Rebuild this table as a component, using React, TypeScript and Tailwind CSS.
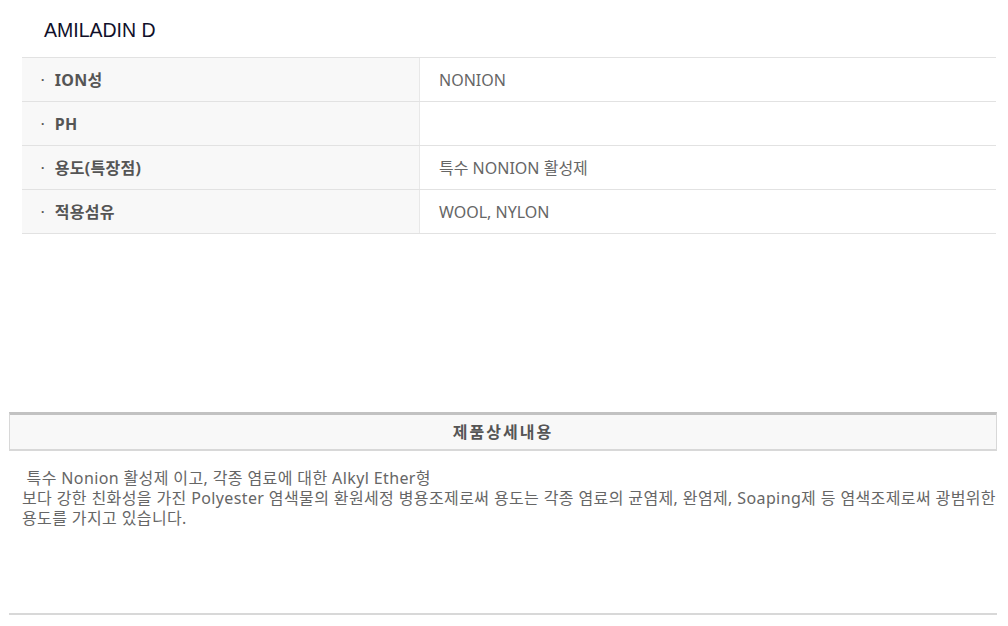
import React from "react";

const rows = [
  { label: "ION성", value: "NONION" },
  { label: "PH", value: "" },
  { label: "용도(특장점)", value: "특수 NONION 활성제" },
  { label: "적용섬유", value: "WOOL, NYLON" },
];

const font = { fontFamily: '"Noto Sans", "Noto Sans CJK KR", sans-serif' };

export default function App() {
  return (
    <div className="w-[1008px] min-h-[626px] bg-white" style={font}>
      {/* Product name */}
      <div className="h-[57px] pl-[44px] pt-[17px]">
        <h1 className="text-[19.5px] leading-[26px] text-[#10102a] font-['Liberation_Sans',sans-serif]">
          AMILADIN D
        </h1>
      </div>

      {/* Spec table */}
      <div className="ml-[22px] w-[974px] border-t border-[#e2e2e2]">
        {rows.map((row) => (
          <div key={row.label} className="flex h-[44px] border-b border-[#e2e2e2]">
            <div className="w-[398px] flex items-center bg-[#f8f8f8] border-r border-[#e8e8e8] pl-[19px] text-[16px] font-bold text-[#555] tracking-[0.3px]">
              <span className="mr-[10px] text-[12px]">·</span>
              {row.label}
            </div>
            <div className="flex-1 flex items-center pl-[19px] text-[16px] text-[#666]">
              {row.value}
            </div>
          </div>
        ))}
      </div>

      <div className="h-[178px]" />

      {/* Detail section */}
      <div className="ml-[9px] w-[988px] h-[39px] flex items-center justify-center bg-[#f8f8f8] border-t-[3px] border-t-[#c2c2c2] border-x border-x-[#d8d8d8] border-b-2 border-b-[#d8d8d8]">
        <span className="text-[16px] font-bold text-[#555] tracking-[2px]">제품상세내용</span>
      </div>

      <div className="pl-[22px] pt-[17px] text-[16px] leading-[20px] text-[#666] h-[162px] whitespace-nowrap tracking-[0.38px]">
        &nbsp;특수 Nonion 활성제 이고, 각종 염료에 대한 Alkyl Ether형
        <br />
        보다 강한 친화성을 가진 Polyester 염색물의 환원세정 병용조제로써 용도는 각종 염료의 균염제, 완염제, Soaping제 등 염색조제로써 광범위한
        <br />
        용도를 가지고 있습니다.
      </div>

      <div className="ml-[9px] w-[988px] h-[2px] bg-[#d8d8d8]" />
    </div>
  );
}
